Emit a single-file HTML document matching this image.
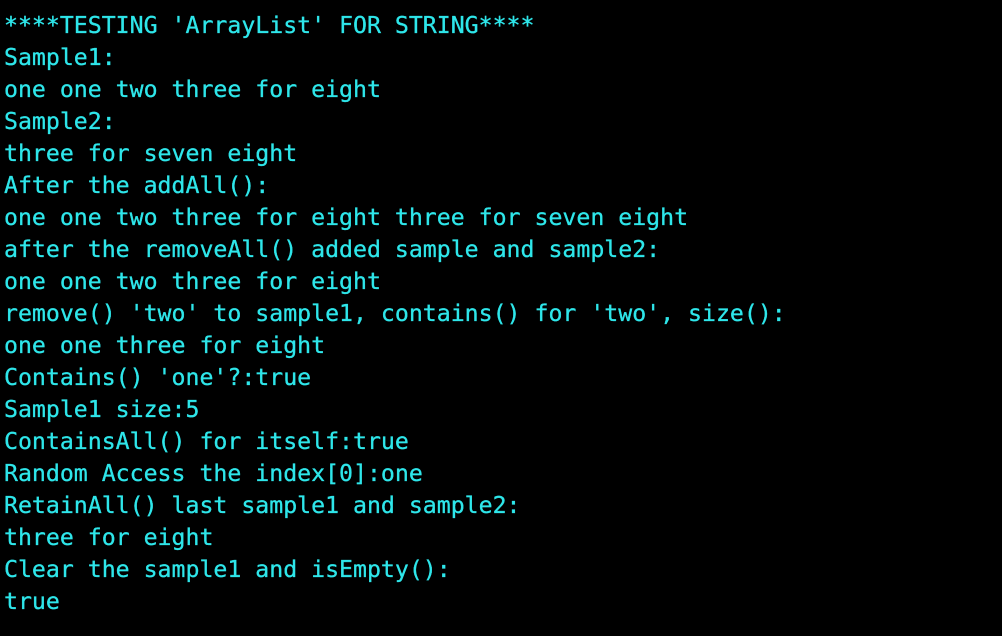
<!DOCTYPE html>
<html><head><style>
html,body{margin:0;padding:0;background:#000;width:1002px;height:636px;overflow:hidden}
pre{margin:0;padding:10px 0 0 4px;font-family:"DejaVu Sans Mono","Liberation Mono",monospace;font-size:23.2px;line-height:32px;color:#2ee6ea;white-space:pre;-webkit-text-stroke:0.3px #2ee6ea}
</style></head><body><pre>****TESTING 'ArrayList' FOR STRING****
Sample1:
one one two three for eight
Sample2:
three for seven eight
After the addAll():
one one two three for eight three for seven eight
after the removeAll() added sample and sample2:
one one two three for eight
remove() 'two' to sample1, contains() for 'two', size():
one one three for eight
Contains() 'one'?:true
Sample1 size:5
ContainsAll() for itself:true
Random Access the index[0]:one
RetainAll() last sample1 and sample2:
three for eight
Clear the sample1 and isEmpty():
true</pre></body></html>
